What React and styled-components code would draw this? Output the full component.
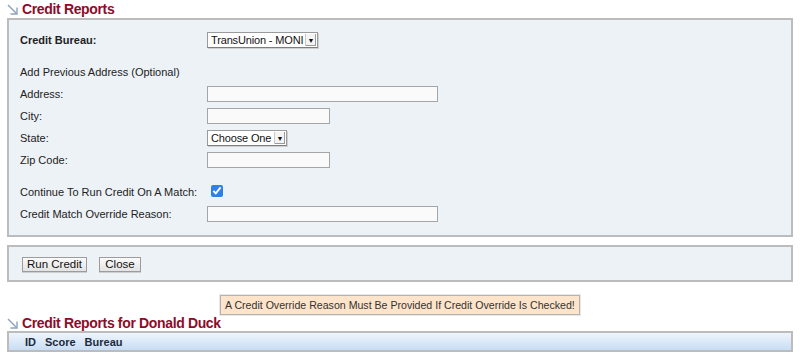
import React from 'react';
import styled, { createGlobalStyle } from 'styled-components';

const GlobalStyle = createGlobalStyle`
  body {
    margin: 0;
    background: #fff;
    font-family: "Liberation Sans", Arial, sans-serif;
    font-size: 11px;
    color: #222;
  }
`;

const Page = styled.div`
  padding: 0 7px;
  width: 786px;
`;

const Heading = styled.h2`
  display: flex;
  align-items: center;
  gap: 4px;
  height: ${(p) => p.$h || 18}px;
  margin: 0;
  color: #8c0c2a;
  font-size: 14px;
  font-weight: bold;
  letter-spacing: -0.35px;
  line-height: 1;
  svg {
    flex: none;
    margin-top: 1px;
  }
`;

const Panel = styled.div`
  background: #edf2f7;
  border: 2px solid #bcbcbc;
  padding: ${(p) => p.$pad};
  margin-top: ${(p) => p.$mt || 0}px;
`;

const Form = styled.div`
  display: flex;
  flex-direction: column;
  gap: 6px;
`;

const Row = styled.div`
  display: grid;
  grid-template-columns: 187px 1fr;
  align-items: center;
  height: 16px;
  margin-top: ${(p) => (p.$spaced ? 10 : 0)}px;
`;

const Label = styled.span`
  font-weight: ${(p) => (p.$bold ? 'bold' : 'normal')};
  color: #222;
`;

const TextInput = styled.input`
  box-sizing: border-box;
  width: ${(p) => p.$w}px;
  height: 16px;
  margin: 0;
  padding: 0 3px;
  border: 1px solid #a5a5a5;
  background: #fafafa;
  font: inherit;
`;

const SelectBox = styled.label`
  display: inline-flex;
  align-items: stretch;
  box-sizing: border-box;
  width: ${(p) => p.$w}px;
  height: 16px;
  border: 1px solid #9a9a9a;
  border-bottom-color: #7d7d7d;
  background: #fff;
  box-shadow: 1px 1px 0 #d0d0d0;
`;

const NativeSelect = styled.select`
  appearance: none;
  flex: 1;
  min-width: 0;
  border: 0;
  margin: 0;
  padding: 0 0 0 3px;
  background: transparent;
  font: inherit;
  font-size: 11px;
  letter-spacing: -0.15px;
  color: #111;
  outline: none;
`;

const Arrow = styled.span`
  display: flex;
  align-items: center;
  justify-content: center;
  width: 10px;
  margin: 1px 1px 1px 0;
  background: #f4f4f4;
  border-left: 1px solid #c8c8c8;
  box-shadow: inset -1px -1px 0 #9a9a9a;
  font-size: 7px;
  color: #111;
`;

const Check = styled.input`
  width: 12px;
  height: 12px;
  margin: 0 0 0 4px;
  accent-color: #2f7fe6;
`;

const ButtonRow = styled.div`
  display: flex;
  gap: 12px;
`;

const Button = styled.button`
  box-sizing: border-box;
  width: ${(p) => p.$w}px;
  height: 15px;
  margin: 0;
  padding: 0;
  border: 1px solid #9c9c9c;
  background: linear-gradient(#fbfbfb, #e3e3e3);
  box-shadow: 0 1px 0 #cfcfcf;
  font: inherit;
  font-size: 11.5px;
  color: #111;
  line-height: 13px;
`;

const MessageWrap = styled.div`
  display: flex;
  justify-content: center;
  margin-top: 13px;
`;

const Message = styled.div`
  box-sizing: border-box;
  width: 360px;
  height: 20px;
  display: flex;
  align-items: center;
  padding-left: 4px;
  background: #fde4ca;
  border: 1px solid #b3b3b3;
  box-shadow: 0 0 0 1px #e8e8e8;
  color: #333;
  font-size: 10.6px;
  white-space: nowrap;
`;

const TableBar = styled.div`
  display: flex;
  align-items: center;
  gap: 9px;
  height: 17px;
  padding-left: 16px;
  border: 2px solid #bcbcbc;
  background: linear-gradient(#eef5fd, #c8ddf4);
`;

const HeadCell = styled.span`
  font-weight: bold;
  color: #1c2a3b;
`;

const CornerArrow = () => (
  <svg width="11" height="11" viewBox="0 0 11 11" fill="none">
    <path d="M1 1 L9.5 9.5" stroke="#8ea2bd" strokeWidth="1.4" />
    <path d="M3.5 10 H10 V3.5" stroke="#8ea2bd" strokeWidth="1.4" />
  </svg>
);

const Select = ({ w, value }) => (
  <SelectBox $w={w}>
    <NativeSelect defaultValue={value}>
      <option>{value}</option>
    </NativeSelect>
    <Arrow>▼</Arrow>
  </SelectBox>
);

export default function App() {
  return (
    <Page>
      <GlobalStyle />
      <Heading>
        <CornerArrow />
        Credit Reports
      </Heading>
      <Panel $pad="12px 11px 13px">
        <Form>
          <Row>
            <Label $bold>Credit Bureau:</Label>
            <div>
              <Select w={111} value="TransUnion - MONI" />
            </div>
          </Row>
          <Row $spaced>
            <Label>Add Previous Address (Optional)</Label>
          </Row>
          <Row>
            <Label>Address:</Label>
            <div>
              <TextInput $w={231} />
            </div>
          </Row>
          <Row>
            <Label>City:</Label>
            <div>
              <TextInput $w={123} />
            </div>
          </Row>
          <Row>
            <Label>State:</Label>
            <div>
              <Select w={80} value="Choose One" />
            </div>
          </Row>
          <Row>
            <Label>Zip Code:</Label>
            <div>
              <TextInput $w={123} />
            </div>
          </Row>
          <Row $spaced>
            <Label>Continue To Run Credit On A Match:</Label>
            <div>
              <Check type="checkbox" defaultChecked />
            </div>
          </Row>
          <Row>
            <Label>Credit Match Override Reason:</Label>
            <div>
              <TextInput $w={231} />
            </div>
          </Row>
        </Form>
      </Panel>
      <Panel $pad="10px 13px 8px" $mt={8}>
        <ButtonRow>
          <Button $w={65}>Run Credit</Button>
          <Button $w={42}>Close</Button>
        </ButtonRow>
      </Panel>
      <MessageWrap>
        <Message>A Credit Override Reason Must Be Provided If Credit Override Is Checked!</Message>
      </MessageWrap>
      <Heading $h={16}>
        <CornerArrow />
        Credit Reports for Donald Duck
      </Heading>
      <TableBar>
        <HeadCell>ID</HeadCell>
        <HeadCell>Score</HeadCell>
        <HeadCell>Bureau</HeadCell>
      </TableBar>
    </Page>
  );
}
